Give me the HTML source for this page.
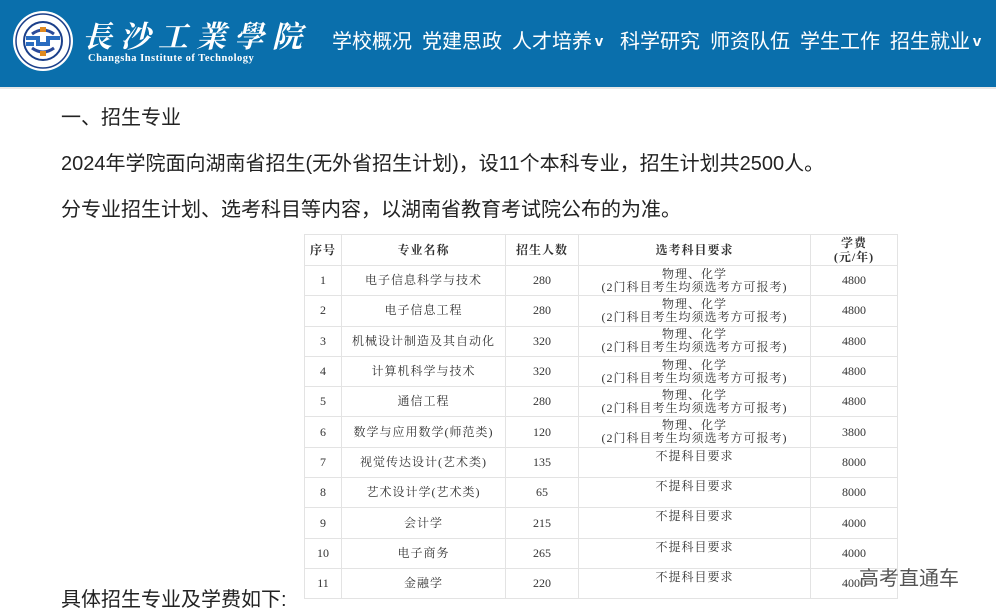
<!DOCTYPE html>
<html><head><meta charset="utf-8"><style>
*{margin:0;padding:0;box-sizing:border-box}
body{width:996px;height:615px;overflow:hidden;background:#fff;font-family:"Liberation Sans","Noto Sans CJK SC",sans-serif;position:relative}
.hdr{position:absolute;left:0;top:0;width:996px;height:87px;background:#0a6fac}
.strip{position:absolute;left:0;top:87px;width:996px;height:2px;background:#e8e8e8}
.nav span{position:absolute;top:25px;color:#fff;font-size:20px;white-space:nowrap}
.nav i{font-style:normal;font-family:"Liberation Sans",sans-serif;font-size:15px;font-weight:bold;display:inline-block;width:14px;text-align:center;vertical-align:2px}
.p{position:absolute;left:61px;font-size:20px;color:#222;white-space:nowrap}
table{position:absolute;left:304px;top:234px;border-collapse:collapse;font-family:"Liberation Serif","Noto Serif CJK SC",serif;font-size:12px;color:#333;letter-spacing:1px}
td{border:1px solid #e3e3e3;text-align:center;height:30.3px;line-height:13px;padding:0}
td.n{letter-spacing:0}
th{border:1px solid #e3e3e3;height:31px;font-size:12px;font-weight:bold;line-height:14px}
.wm{position:absolute;left:859px;top:562px;font-size:20px;color:#555;font-family:"Noto Sans CJK SC",sans-serif;text-shadow:0 0 2px #fff}
</style></head><body>
<div class="hdr">
<svg style="position:absolute;left:12px;top:10px" width="62" height="62" viewBox="0 0 62 62">
<circle cx="31" cy="31" r="30" fill="#fff"/><circle cx="31" cy="31" r="27" fill="none" stroke="#1b3f8a" stroke-width="1.5"/>
<circle cx="31" cy="31" r="19" fill="#fff" stroke="#1b3f8a" stroke-width="2"/>
<path d="M14 28 h12 v6 h10 v-6 h12 M14 34 h8 M40 28 h8" stroke="#2a6cc0" stroke-width="4" fill="none"/>
<path d="M20 24 q11-8 22 0 M20 38 q11 8 22 0" stroke="#2a4a9a" stroke-width="3" fill="none"/>
<rect x="28" y="17" width="6" height="5" fill="#e08a20"/><rect x="28" y="41" width="6" height="5" fill="#e08a20"/>
</svg>
<div style="position:absolute;left:82px;top:12px;color:#fff;font-size:30px;font-family:'Noto Serif CJK SC',serif;font-style:italic;letter-spacing:8px;font-weight:bold">長沙工業學院</div>
<div style="position:absolute;left:88px;top:53px;color:#fff;font-size:10.5px;font-family:'Liberation Serif',serif;font-weight:bold;letter-spacing:.5px">Changsha Institute of Technology</div>
<div class="nav"><span style="left:332px">学校概况</span><span style="left:422px">党建思政</span><span style="left:512px">人才培养<i>v</i></span><span style="left:620px">科学研究</span><span style="left:710px">师资队伍</span><span style="left:800px">学生工作</span><span style="left:890px">招生就业<i>v</i></span></div>
</div>
<div class="strip"></div>
<div class="p" style="top:101px">一、招生专业</div>
<div class="p" style="top:147px">2024年学院面向湖南省招生(无外省招生计划)，设11个本科专业，招生计划共2500人。</div>
<div class="p" style="top:193px">分专业招生计划、选考科目等内容，以湖南省教育考试院公布的为准。</div>
<div class="p" style="top:583px">具体招生专业及学费如下:</div>
<table>
<tr><th style="width:37px">序号</th><th style="width:164px">专业名称</th><th style="width:73px">招生人数</th><th style="width:232px">选考科目要求</th><th style="width:87px">学费<br>(元/年)</th></tr>
<tr><td class="n">1</td><td>电子信息科学与技术</td><td class="n">280</td><td>物理、化学<br>(2门科目考生均须选考方可报考)</td><td class="n">4800</td></tr>
<tr><td class="n">2</td><td>电子信息工程</td><td class="n">280</td><td>物理、化学<br>(2门科目考生均须选考方可报考)</td><td class="n">4800</td></tr>
<tr><td class="n">3</td><td>机械设计制造及其自动化</td><td class="n">320</td><td>物理、化学<br>(2门科目考生均须选考方可报考)</td><td class="n">4800</td></tr>
<tr><td class="n">4</td><td>计算机科学与技术</td><td class="n">320</td><td>物理、化学<br>(2门科目考生均须选考方可报考)</td><td class="n">4800</td></tr>
<tr><td class="n">5</td><td>通信工程</td><td class="n">280</td><td>物理、化学<br>(2门科目考生均须选考方可报考)</td><td class="n">4800</td></tr>
<tr><td class="n">6</td><td>数学与应用数学(师范类)</td><td class="n">120</td><td>物理、化学<br>(2门科目考生均须选考方可报考)</td><td class="n">3800</td></tr>
<tr><td class="n">7</td><td>视觉传达设计(艺术类)</td><td class="n">135</td><td style="vertical-align:top;padding-top:2px">不提科目要求</td><td class="n">8000</td></tr>
<tr><td class="n">8</td><td>艺术设计学(艺术类)</td><td class="n">65</td><td style="vertical-align:top;padding-top:2px">不提科目要求</td><td class="n">8000</td></tr>
<tr><td class="n">9</td><td>会计学</td><td class="n">215</td><td style="vertical-align:top;padding-top:2px">不提科目要求</td><td class="n">4000</td></tr>
<tr><td class="n">10</td><td>电子商务</td><td class="n">265</td><td style="vertical-align:top;padding-top:2px">不提科目要求</td><td class="n">4000</td></tr>
<tr><td class="n">11</td><td>金融学</td><td class="n">220</td><td style="vertical-align:top;padding-top:2px">不提科目要求</td><td class="n">4000</td></tr>
</table>
<div class="wm">高考直通车</div>
</body></html>
